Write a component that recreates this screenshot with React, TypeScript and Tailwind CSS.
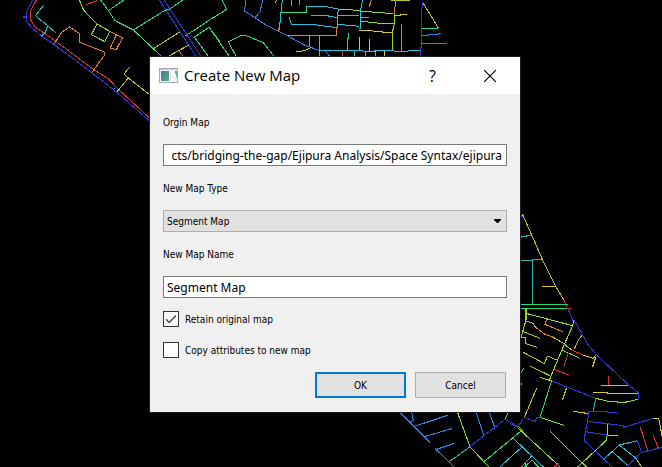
import { useState } from "react";
import type { ReactNode } from "react";

const BLUE = "#3535dc";
const SKY = "#3482dc";
const CYAN = "#22c4dc";
const TEAL = "#22b8a8";
const GREEN = "#28dc80";
const LIME = "#8cdc28";
const YELLOW = "#bcc828";
const GOLD = "#dcc828";
const ORANGE = "#dc8230";
const RED = "#dc3030";

type Tile = { x: number; y: number; lines: [string, string[]][] };

// Street segments, in thirds of a pixel from each tile's corner.
const tiles: Tile[] = [
  {
    x: 0,
    y: 0,
    lines: [
      [BLUE, ["97,0 80,35 80,65 97,85 125,108 160,132 275,218 340,268 450,364", "69,51 80,51", "478,0 590,172", "492,0 605,172"]],
      [RED, ["109,0 92,32 92,60 104,80 165,122 280,208 325,236 355,268 451,356", "259,14 290,2"]],
      [TEAL, ["131,16 106,47 143,77 167,98", "143,77 137,95 125,108"]],
      [ORANGE, ["162,133 185,97 208,81 238,100 238,126 313,156 313,166 275,218", "329,94 368,113 349,149 331,144 349,104", "536,150 550,172"]],
      [LIME, ["238,0 252,32 291,72 329,94 314,125 274,104 291,72"]],
      [GREEN, ["302,0 325,32 345,62 400,90 460,146 487,172", "325,32 372,0", "400,90 495,31 508,28 549,0", "554,109 660,40", "627,172 583,111 627,82 660,126"]],
      [YELLOW, ["460,146 541,95", "500,172 568,134", "350,277 385,234 372,222 388,202", "385,234 450,285"]],
      [SKY, ["338,271 345,265"]],
    ],
  },
  {
    x: 210,
    y: 0,
    lines: [
      [GREEN, ["36,0 50,28 0,59", "0,86 60,172", "80,172 55,126 95,106 112,108 160,128 194,172", "213,37 290,37 290,19", "299,107 299,137", "328,107 328,150", "415,100 412,150"]],
      [SKY, ["107,0 104,33 135,53 170,76 230,106 285,136 330,152 345,152 360,170", "158,0 150,36 135,53"]],
      [YELLOW, ["200,0 196,8"]],
      [GOLD, ["258,155 285,152 304,142"]],
      [CYAN, ["217,0 213,36 208,90", "290,19 345,19 385,27 382,53 382,83", "303,46 345,46 382,53", "238,52 244,73 305,73 350,79 380,83", "230,106 378,106", "328,172 328,152 450,152", "385,46 448,48", "382,73 448,79"]],
      [ORANGE, ["244,0 244,19", "268,0 268,16", "208,84 203,94", "380,83 378,109"]],
      [LIME, ["385,28 450,31"]],
      [RED, ["397,152 397,172"]],
    ],
  },
  {
    x: 340,
    y: 0,
    lines: [
      [CYAN, ["68,0 62,30 60,88", "62,51 87,52", "60,152 78,154 105,154 105,152 160,152 163,154 203,154 205,151 240,151", "43,152 43,172", "76,152 76,172", "106,152 106,172"]],
      [LIME, ["62,34 96,36 160,41", "163,43 163,70 157,98 157,150", "60,64 84,66 110,69 162,71"]],
      [YELLOW, ["153,1 210,1", "250,10 295,84"]],
      [GOLD, ["163,46 200,44", "58,91 90,92 125,96 158,97", "58,110 58,150", "88,117 88,154", "133,152 133,172"]],
      [ORANGE, ["167,0 163,43", "184,72 184,152", "94,0 88,20"]],
      [GREEN, ["244,85 295,85"]],
      [BLUE, ["247,6 244,60 244,130 241,168"]],
      [SKY, ["244,106 288,104 304,100", "244,132 292,130 320,130"]],
      ["#6b6414", ["241,169 303,169"]],
    ],
  },
  {
    x: 510,
    y: 200,
    lines: [
      [BLUE, ["30,48 40,48", "174,327 192,370"]],
      [YELLOW, ["37,42 65,105 97,178 137,259 162,300"]],
      [TEAL, ["30,112 64,105", "30,181 67,181", "67,312 67,178 97,178"]],
      [GOLD, ["97,259 137,259"]],
      [GREEN, ["30,313 173,313", "30,325 172,325"]],
      [RED, ["162,300 170,322", "170,325 182,325"]],
    ],
  },
  {
    x: 510,
    y: 320,
    lines: [
      [LIME, ["48,-36 48,0 38,35 33,55", "48,-20 105,-5 188,17", "192,0 188,17 160,80 118,180", "273,196 355,196", "257,235 300,245 345,247 385,238", "292,311 292,345 288,362 200,444", "90,292 163,316", "22,322 154,444", "121,334 232,444", "378,415 397,444", "30,205 35,190"]],
      [YELLOW, ["45,2 70,10 75,20", "130,52 160,70 185,90", "40,35 90,55", "33,52 46,52 46,70 80,82", "217,45 205,60 193,87", "155,90 210,115", "40,97 103,131 112,108 140,120", "61,139 120,167", "90,172 125,183", "170,203 158,239", "80,205 43,292"]],
      [GOLD, ["220,105 250,115 258,105", "258,110 248,140", "250,217 285,218 315,222 383,219", "190,274 236,281", "430,295 446,295 456,347", "292,346 323,346"]],
      [ORANGE, ["75,20 103,42 130,52", "110,-3 105,13 158,35"]],
      [RED, ["185,90 220,105", "175,100 161,140", "133,148 176,165", "295,168 295,196", "391,322 414,393", "430,346 445,385", "133,442 145,430"]],
      [BLUE, ["192,0 235,75 262,107 355,194 385,218 385,238", "126,183 180,205 257,235", "323,281 318,277 236,274 233,304 226,335 223,362 309,444", "233,304 340,317 340,322 430,295", "226,335 292,345", "0,310 22,322 43,292 75,305 80,292 92,292", "382,362 395,398 375,414 350,444", "395,398 456,382"]],
      [TEAL, ["257,235 250,273", "30,165 41,145"]],
      [GREEN, ["125,183 90,292", "37,330 -77,424", "40,444 66,420 88,444", "46,428 52,444"]],
      [CYAN, ["10,355 100,441", "37,380 -34,444", "66,407 31,444", "283,416 328,375 382,362", "307,395 352,435", "328,375 378,415"]],
    ],
  },
  {
    x: 390,
    y: 390,
    lines: [
      [SKY, ["28,66 120,158", "136,176 194,233", "73,109 173,76", "103,140 185,116", "140,178 194,160", "65,66 70,92 58,96", "258,66 282,137", "298,66 315,115"]],
      [LIME, ["203,68 240,170 298,233", "385,110 398,121"]],
      [BLUE, ["240,170 345,88 385,110"]],
      [TEAL, ["240,170 178,215"]],
      [YELLOW, ["355,68 345,88"]],
    ],
  },
];

function StreetMap() {
  return (
    <svg className="absolute inset-0 h-full w-full" fill="none" strokeWidth="3.1" shapeRendering="crispEdges" aria-hidden="true">
      {tiles.map((tile, i) => (
        <g key={i} transform={`translate(${tile.x} ${tile.y}) scale(0.33333)`}>
          {tile.lines.map(([color, paths]) =>
            paths.map((points) => <polyline key={points} points={points} stroke={color} />),
          )}
        </g>
      ))}
    </svg>
  );
}

function AppIcon() {
  return (
    <svg className="h-4 w-5" viewBox="0 0 20 16" aria-hidden="true">
      <defs>
        <linearGradient id="pane" x1="0" y1="0" x2="1" y2="1">
          <stop offset="0" stopColor="#4580a0" />
          <stop offset="1" stopColor="#55ab84" />
        </linearGradient>
      </defs>
      <rect x="0.5" y="0.5" width="18" height="14" fill="#f4f4f6" stroke="#a4a8b0" />
      <path d="M1 1.5h17" stroke="#c9d0da" />
      <rect x="2" y="3" width="8" height="10" fill="url(#pane)" />
      <path d="M11.5 3v10" stroke="#dcdfe4" />
      <path d="M16 3h2v6h-1V6h-1z" fill="#5fb59a" />
    </svg>
  );
}

function Field({ id, label, children }: { id: string; label: string; children: ReactNode }) {
  return (
    <div className="flex flex-col gap-[10px]">
      <label htmlFor={id} className="leading-[22px]">
        {label}
      </label>
      {children}
    </div>
  );
}

function Check({ label, checked, onChange }: { label: string; checked: boolean; onChange: (v: boolean) => void }) {
  return (
    <label className="flex h-4 items-center gap-[6px]">
      <span className="grid size-4 shrink-0 place-items-center">
        <input
          type="checkbox"
          checked={checked}
          onChange={(e) => onChange(e.target.checked)}
          className="col-start-1 row-start-1 size-4 appearance-none border border-[#333333] bg-white"
        />
        {checked && (
          <svg className="pointer-events-none z-10 col-start-1 row-start-1 size-4" viewBox="0 0 16 16" fill="none" stroke="#444444" strokeWidth="1.4" aria-hidden="true">
            <path d="M3 8.2l3.3 3.4L13 4.6" />
          </svg>
        )}
      </span>
      {label}
    </label>
  );
}

export default function App() {
  const [origin, setOrigin] = useState("cts/bridging-the-gap/Ejipura Analysis/Space Syntax/ejipura");
  const [name, setName] = useState("Segment Map");
  const [retain, setRetain] = useState(true);
  const [copy, setCopy] = useState(false);

  return (
    <main className="relative min-h-screen overflow-hidden bg-black">
      <StreetMap />
      <section
        role="dialog"
        aria-labelledby="title"
        className="absolute top-[57px] left-[150px] w-[370px] bg-[#f0f0f0] font-['DejaVu_Sans_Condensed','Noto_Sans',sans-serif] text-[10px] text-black outline outline-[#1c1c1c]"
      >
        <header className="flex h-[37px] items-center bg-white pl-[9px]">
          <AppIcon />
          <h1 id="title" className="flex-1 pl-[5px] font-['Open_Sans',sans-serif] text-[15px]">
            Create New Map
          </h1>
          <button type="button" aria-label="Help" className="h-full w-[55px] font-['Open_Sans',sans-serif] text-[16px]">
            ?
          </button>
          <button type="button" aria-label="Close" className="grid h-full w-[60px] place-items-center">
            <svg className="size-3" viewBox="0 0 12 12" stroke="#000000" strokeWidth="1.1" aria-hidden="true">
              <path d="M0 0l12 12M12 0L0 12" />
            </svg>
          </button>
        </header>

        <form className="px-[13px] pt-[18px] pb-[14px]" onSubmit={(e) => e.preventDefault()}>
          <div className="flex flex-col gap-3">
            <Field id="origin" label="Orgin Map">
              <input
                id="origin"
                value={origin}
                onChange={(e) => setOrigin(e.target.value)}
                className="h-[22px] w-full border border-[#7a7a7a] bg-white pr-1 text-right font-['Noto_Sans',sans-serif] text-[12px]"
              />
            </Field>
            <Field id="type" label="New Map Type">
              <div className="grid items-center">
                <select id="type" className="col-start-1 row-start-1 h-[22px] w-full appearance-none border border-[#adadad] bg-[#e1e1e1] pl-[3px]">
                  <option>Segment Map</option>
                </select>
                <svg className="pointer-events-none col-start-1 row-start-1 mr-[6px] h-1 w-[7px] justify-self-end" viewBox="0 0 7 4" aria-hidden="true">
                  <path d="M0 0h7v1L4 4H3L0 1z" />
                </svg>
              </div>
            </Field>
            <Field id="name" label="New Map Name">
              <input
                id="name"
                value={name}
                onChange={(e) => setName(e.target.value)}
                className="h-[22px] w-full border border-[#7a7a7a] bg-white px-[3px] font-['Noto_Sans',sans-serif] text-[12px]"
              />
            </Field>
          </div>

          <div className="flex flex-col gap-[15px] pt-[13px]">
            <Check label="Retain original map" checked={retain} onChange={setRetain} />
            <Check label="Copy attributes to new map" checked={copy} onChange={setCopy} />
          </div>

          <div className="flex justify-end gap-[9px] pt-[14px] pr-px">
            <button type="submit" className="h-[26px] w-[91px] border-2 border-[#0078d7] bg-[#e1e1e1]">
              OK
            </button>
            <button type="button" className="h-[26px] w-[91px] border border-[#adadad] bg-[#e1e1e1]">
              Cancel
            </button>
          </div>
        </form>
      </section>
    </main>
  );
}
